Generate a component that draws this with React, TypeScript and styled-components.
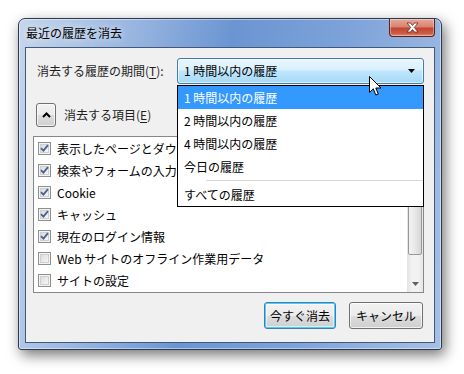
import React from "react";
import styled, { createGlobalStyle } from "styled-components";

const GlobalStyle = createGlobalStyle`
  html, body {
    margin: 0;
    padding: 0;
    background: #ffffff;
  }
  body {
    font-family: "Noto Sans CJK JP", "Noto Sans", sans-serif;
    font-size: 12px;
    color: #000;
  }
`;

const Page = styled.div`
  position: relative;
  width: 464px;
  height: 374px;
  padding: 18px 0 0 18px;
  box-sizing: border-box;
`;

const Window = styled.div`
  width: 424px;
  height: 332px;
  box-sizing: border-box;
  display: flex;
  flex-direction: column;
  border: 1px solid #2b3a52;
  border-radius: 7px 7px 3px 3px;
  background: linear-gradient(100deg, #c6d6eb 0%, #9db9e1 22%, #6b95d2 45%, #7ca2d9 68%, #a7c0e4 100%);
  box-shadow: 3px 5px 14px rgba(0, 0, 0, 0.55), inset 0 0 0 1px rgba(255, 255, 255, 0.45);
`;

const TitleBar = styled.div`
  height: 28px;
  display: flex;
  justify-content: space-between;
  align-items: flex-start;
  padding: 0 6px 0 7px;
`;

const Title = styled.span`
  line-height: 28px;
  font-size: 12px;
  color: #000;
  text-shadow: 0 0 6px rgba(255, 255, 255, 0.9);
`;

const CloseButton = styled.div`
  width: 46px;
  height: 18px;
  box-sizing: border-box;
  border: 1px solid #5a2119;
  border-top: none;
  border-radius: 0 0 4px 4px;
  background: linear-gradient(to bottom, #e9a897 0%, #d98370 45%, #c4452f 55%, #cc5c44 85%, #e58c6b 100%);
  display: flex;
  align-items: center;
  justify-content: center;
  box-shadow: inset 0 0 0 1px rgba(255, 255, 255, 0.35);
`;

const Client = styled.div`
  position: relative;
  flex: 1;
  margin: 0 6px 6px 6px;
  border: 1px solid #42587a;
  background: #f0f0f0;
  display: flex;
  flex-direction: column;
  padding: 10px 10px 0 7px;
`;

const PeriodRow = styled.div`
  display: flex;
  align-items: center;
  justify-content: space-between;
  padding-left: 4px;
`;

const Label = styled.span`
  font-size: 12px;
  line-height: 16px;
  color: #1e1e1e;
`;

const Key = styled.span`
  text-decoration: underline;
  text-underline-offset: 2px;
`;

const Combo = styled.div`
  width: 247px;
  height: 26px;
  box-sizing: border-box;
  border: 1px solid #3c7fb1;
  border-radius: 3px;
  background: linear-gradient(to bottom, #eaf6fd 0%, #d9f0fc 45%, #bee6fd 50%, #a7d9f5 100%);
  display: flex;
  align-items: center;
  justify-content: space-between;
  padding: 0 8px 0 6px;
  box-shadow: inset 0 0 0 1px rgba(255, 255, 255, 0.6);
`;

const ComboText = styled.span`
  font-size: 12px;
  line-height: 16px;
`;

const Dropdown = styled.div`
  position: absolute;
  left: 151px;
  top: 37px;
  width: 247px;
  box-sizing: border-box;
  border: 1px solid #000;
  background: #fff;
  z-index: 5;
`;

const Option = styled.div<{ $active?: boolean }>`
  height: 23px;
  line-height: 23px;
  padding-left: 6px;
  font-size: 12px;
  background: ${(p) => (p.$active ? "#3399ff" : "#fff")};
  color: ${(p) => (p.$active ? "#fff" : "#000")};
`;

const Separator = styled.div`
  height: 5px;
  display: flex;
  align-items: center;
  padding-left: 28px;
  &::after {
    content: "";
    flex: 1;
    height: 1px;
    background: #d7d7d7;
  }
`;

const ItemsRow = styled.div`
  display: flex;
  align-items: center;
  gap: 8px;
  margin-top: 19px;
  padding-left: 3px;
`;

const ToggleButton = styled.div`
  width: 20px;
  height: 24px;
  box-sizing: border-box;
  border: 1px solid #707070;
  border-radius: 3px;
  background: linear-gradient(to bottom, #f2f2f2 0%, #ebebeb 50%, #dddddd 51%, #cfcfcf 100%);
  display: flex;
  align-items: center;
  justify-content: center;
  box-shadow: inset 0 0 0 1px rgba(255, 255, 255, 0.7);
`;

const ListBox = styled.div`
  margin-top: 9px;
  width: 391px;
  height: 157px;
  box-sizing: border-box;
  border: 1px solid #828790;
  background: #fff;
  display: flex;
`;

const Rows = styled.div`
  flex: 1;
  overflow: hidden;
`;

const Row = styled.div`
  height: 22px;
  display: flex;
  align-items: center;
  gap: 6px;
  padding-left: 4px;
  white-space: nowrap;
  font-size: 12px;
`;

const CheckBox = styled.div`
  width: 13px;
  height: 13px;
  box-sizing: border-box;
  border: 1px solid #8e8f8f;
  background: #f4f4f4;
  display: flex;
  align-items: center;
  justify-content: center;
  flex-shrink: 0;
  &::before {
    content: "";
    position: absolute;
  }
`;

const CheckInner = styled.div`
  width: 9px;
  height: 9px;
  box-sizing: border-box;
  border: 1px solid #cfcfcf;
  background: linear-gradient(135deg, #dcdcdc 0%, #f6f6f6 100%);
  display: flex;
  align-items: center;
  justify-content: center;
  overflow: visible;
`;

const ScrollBar = styled.div`
  width: 16px;
  display: flex;
  flex-direction: column;
  background: linear-gradient(to right, #e3e3e3 0%, #f2f2f2 30%, #f2f2f2 70%, #e6e6e6 100%);
`;

const ScrollArrow = styled.div`
  height: 17px;
  display: flex;
  align-items: center;
  justify-content: center;
`;

const Thumb = styled.div`
  margin: 0 1px;
  height: 101px;
  box-sizing: border-box;
  border: 1px solid #979797;
  border-radius: 2px;
  background: linear-gradient(to right, #f3f3f3 0%, #e8e8e8 50%, #d6d6d6 100%);
`;

const Track = styled.div`
  flex: 1;
`;

const ButtonRow = styled.div`
  display: flex;
  justify-content: flex-end;
  gap: 13px;
  margin-top: 9px;
  padding-right: 1px;
`;

const Button = styled.div<{ $default?: boolean; $w: number }>`
  width: ${(p) => p.$w}px;
  height: 27px;
  box-sizing: border-box;
  border: 1px solid ${(p) => (p.$default ? "#3c7fb1" : "#707070")};
  border-radius: 3px;
  background: linear-gradient(to bottom, #f2f2f2 0%, #ebebeb 50%, #dddddd 51%, #cfcfcf 100%);
  box-shadow: ${(p) =>
    p.$default ? "inset 0 0 0 1px #48d0f8, inset 0 0 0 2px rgba(255,255,255,0.5)" : "inset 0 0 0 1px rgba(255,255,255,0.7)"};
  display: flex;
  align-items: center;
  justify-content: center;
  font-size: 12px;
`;

const Cursor = styled.svg`
  position: absolute;
  left: 369px;
  top: 76px;
  z-index: 10;
`;

const items = [
  { label: "表示したページとダウンロードの履歴", checked: true },
  { label: "検索やフォームの入力履歴", checked: true },
  { label: "Cookie", checked: true },
  { label: "キャッシュ", checked: true },
  { label: "現在のログイン情報", checked: true },
  { label: "Web サイトのオフライン作業用データ", checked: false },
  { label: "サイトの設定", checked: false },
];

const Check = ({ checked }: { checked: boolean }) => (
  <CheckBox>
    <CheckInner>
      {checked && (
        <svg width="9" height="9" viewBox="0 0 9 9" style={{ overflow: "visible" }}>
          <path d="M1 4.2 L3.4 6.6 L8 1.2" fill="none" stroke="#4a5f95" strokeWidth="1.8" />
        </svg>
      )}
    </CheckInner>
  </CheckBox>
);

const App = () => {
  return (
    <Page>
      <GlobalStyle />
      <Window>
        <TitleBar>
          <Title>最近の履歴を消去</Title>
          <CloseButton>
            <svg width="13" height="11" viewBox="0 0 13 11">
              <path
                d="M1 1 H4.5 L6.5 3.5 L8.5 1 H12 L8.3 5.5 L12 10 H8.5 L6.5 7.5 L4.5 10 H1 L4.7 5.5 Z"
                fill="#fff"
                stroke="#5c2a22"
                strokeWidth="0.8"
              />
            </svg>
          </CloseButton>
        </TitleBar>
        <Client>
          <PeriodRow>
            <Label>
              消去する履歴の期間(<Key>T</Key>):
            </Label>
            <Combo>
              <ComboText>1 時間以内の履歴</ComboText>
              <svg width="7" height="4" viewBox="0 0 7 4">
                <path d="M0 0 H7 L3.5 4 Z" fill="#000" />
              </svg>
            </Combo>
          </PeriodRow>
          <Dropdown>
            <Option $active>1 時間以内の履歴</Option>
            <Option>2 時間以内の履歴</Option>
            <Option>4 時間以内の履歴</Option>
            <Option>今日の履歴</Option>
            <Separator />
            <Option>すべての履歴</Option>
          </Dropdown>
          <ItemsRow>
            <ToggleButton>
              <svg width="9" height="6" viewBox="0 0 9 6">
                <path d="M1 5 L4.5 1.5 L8 5" fill="none" stroke="#000" strokeWidth="2" />
              </svg>
            </ToggleButton>
            <Label>
              消去する項目(<Key>E</Key>)
            </Label>
          </ItemsRow>
          <ListBox>
            <Rows>
              {items.map((it) => (
                <Row key={it.label}>
                  <Check checked={it.checked} />
                  <span>{it.label}</span>
                </Row>
              ))}
            </Rows>
            <ScrollBar>
              <ScrollArrow />
              <Thumb />
              <Track />
              <ScrollArrow>
                <svg width="7" height="4" viewBox="0 0 7 4">
                  <path d="M0 0 H7 L3.5 4 Z" fill="#606060" />
                </svg>
              </ScrollArrow>
            </ScrollBar>
          </ListBox>
          <ButtonRow>
            <Button $default $w={72}>今すぐ消去</Button>
            <Button $w={74}>キャンセル</Button>
          </ButtonRow>
        </Client>
      </Window>
      <Cursor width="13" height="21" viewBox="0 0 13 21">
        <path
          d="M0.5 0.5 V16.5 L4.3 12.8 L6.8 19 L9.3 18 L6.8 12 H12 Z"
          fill="#fff"
          stroke="#000"
          strokeWidth="1"
        />
      </Cursor>
    </Page>
  );
};

export default App;
